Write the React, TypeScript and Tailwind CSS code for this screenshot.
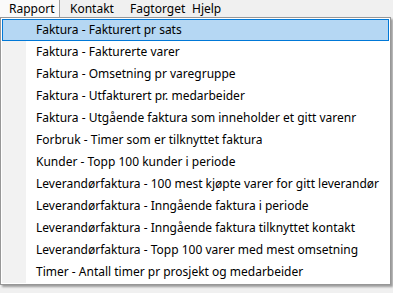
const items = [
  "Faktura - Fakturert pr sats",
  "Faktura - Fakturerte varer",
  "Faktura - Omsetning pr varegruppe",
  "Faktura - Utfakturert pr. medarbeider",
  "Faktura - Utgående faktura som inneholder et gitt varenr",
  "Forbruk - Timer som er tilknyttet faktura",
  "Kunder - Topp 100 kunder i periode",
  "Leverandørfaktura - 100 mest kjøpte varer for gitt leverandør",
  "Leverandørfaktura - Inngående faktura i periode",
  "Leverandørfaktura - Inngående faktura tilknyttet kontakt",
  "Leverandørfaktura - Topp 100 varer med mest omsetning",
  "Timer - Antall timer pr prosjekt og medarbeider",
];

export default function App() {
  return (
    <div
      className="w-[393px] h-[293px] bg-[#f0f0f0] text-[12px] text-black overflow-hidden"
      style={{ fontFamily: '"Noto Sans", "Open Sans", sans-serif' }}
    >
      {/* menu bar */}
      <div className="flex h-[17px] items-center">
        <div className="h-full w-[60px] pl-[9px] bg-[#fafafa] border-r border-[#a0a0a0] flex items-center">
          Rapport
        </div>
        <div className="pl-[10px] w-[60px]">Kontakt</div>
        <div className="pl-[10px] w-[72px]">Fagtorget</div>
        <div>Hjelp</div>
      </div>

      {/* dropdown */}
      <div className="w-[391px] border border-[#979797] bg-white shadow-[2px_2px_2px_rgba(0,0,0,0.35)] p-[1px] relative">
        <div className="absolute left-[1px] top-[1px] bottom-[1px] w-[24px] bg-[#f2f2f2]" />
        <div className="relative flex flex-col">
          {items.map((t, i) => (
            <div
              key={t}
              className={
                i === 0
                  ? "h-[22px] flex items-center pl-[33px] bg-[#b5d7f3] border border-[#0078d7]"
                  : "h-[22px] flex items-center pl-[34px]"
              }
            >
              {t}
            </div>
          ))}
        </div>
      </div>
    </div>
  );
}
